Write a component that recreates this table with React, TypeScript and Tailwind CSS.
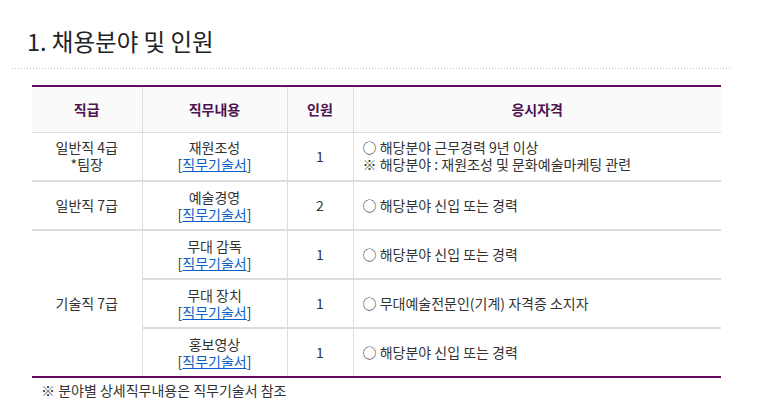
import type { ReactNode } from 'react'

const FONT = '"Noto Sans CJK KR", "Noto Sans", sans-serif'

interface Row {
    grade?: string[]
    gradeSpan?: number
    duty: string
    count: string
    quals: string[]
}

const rows: Row[] = [
    {
        grade: ['일반직 4급', '*팀장'],
        duty: '재원조성',
        count: '1',
        quals: ['○ 해당분야 근무경력 9년 이상', '※ 해당분야 : 재원조성 및 문화예술마케팅 관련'],
    },
    { grade: ['일반직 7급'], duty: '예술경영', count: '2', quals: ['○ 해당분야 신입 또는 경력'] },
    { grade: ['기술직 7급'], gradeSpan: 3, duty: '무대 감독', count: '1', quals: ['○ 해당분야 신입 또는 경력'] },
    { duty: '무대 장치', count: '1', quals: ['○ 무대예술전문인(기계) 자격증 소지자'] },
    { duty: '홍보영상', count: '1', quals: ['○ 해당분야 신입 또는 경력'] },
]

function Th({ children, last }: { children: ReactNode; last?: boolean }) {
    return (
        <th
            className={`h-[46px] border-b border-[#dddddd] ${last ? '' : 'border-r'} bg-[#fafafa] text-center text-[14px] font-bold text-[#4e1350]`}
        >
            {children}
        </th>
    )
}

export default function App() {
    return (
        <div className="w-[765px] h-[416px] bg-white text-[#333] overflow-hidden" style={{ fontFamily: FONT }}>
            <h2 className="pl-[27px] pt-[22px] text-[23.5px] leading-[38px] font-normal text-[#222]">
                1. 채용분야 및 인원
            </h2>
            <div className="ml-3 mr-[34px] mt-[8px] h-px bg-[repeating-linear-gradient(to_right,#c4c4c4_0_1px,transparent_1px_3px)]" />

            <table className="ml-8 mt-[16px] w-[689px] table-fixed border-collapse border-t-2 border-b-2 border-[#620c5f] text-[14px] leading-[17px]">
                <colgroup>
                    <col className="w-[110px]" />
                    <col className="w-[145px]" />
                    <col className="w-[66px]" />
                    <col />
                </colgroup>
                <thead>
                    <tr>
                        <Th>직급</Th>
                        <Th>직무내용</Th>
                        <Th>인원</Th>
                        <Th last>응시자격</Th>
                    </tr>
                </thead>
                <tbody>
                    {rows.map((r, i) => (
                        <tr key={i} className={i < rows.length - 1 ? 'border-b-2 border-[#dddddd]' : ''}>
                            {r.grade && (
                                <td
                                    rowSpan={r.gradeSpan ?? 1}
                                    className="border-r border-[#dddddd] text-center align-middle"
                                >
                                    {r.grade.map((g) => (
                                        <div key={g}>{g}</div>
                                    ))}
                                </td>
                            )}
                            <td className="h-[49px] border-r border-[#dddddd] text-center align-middle">
                                <div>{r.duty}</div>
                                <div>
                                    [<a href="#" className="text-[#0a5fc8] underline underline-offset-[1px]">직무기술서</a>]
                                </div>
                            </td>
                            <td className="border-r border-[#dddddd] text-center align-middle">{r.count}</td>
                            <td className="pl-[9px] align-middle">
                                {r.quals.map((q) => (
                                    <div key={q}>{q}</div>
                                ))}
                            </td>
                        </tr>
                    ))}
                </tbody>
            </table>

            <p className="pl-[41px] pt-[3px] text-[14px] leading-[18px] text-[#333]">※ 분야별 상세직무내용은 직무기술서 참조</p>
        </div>
    )
}
